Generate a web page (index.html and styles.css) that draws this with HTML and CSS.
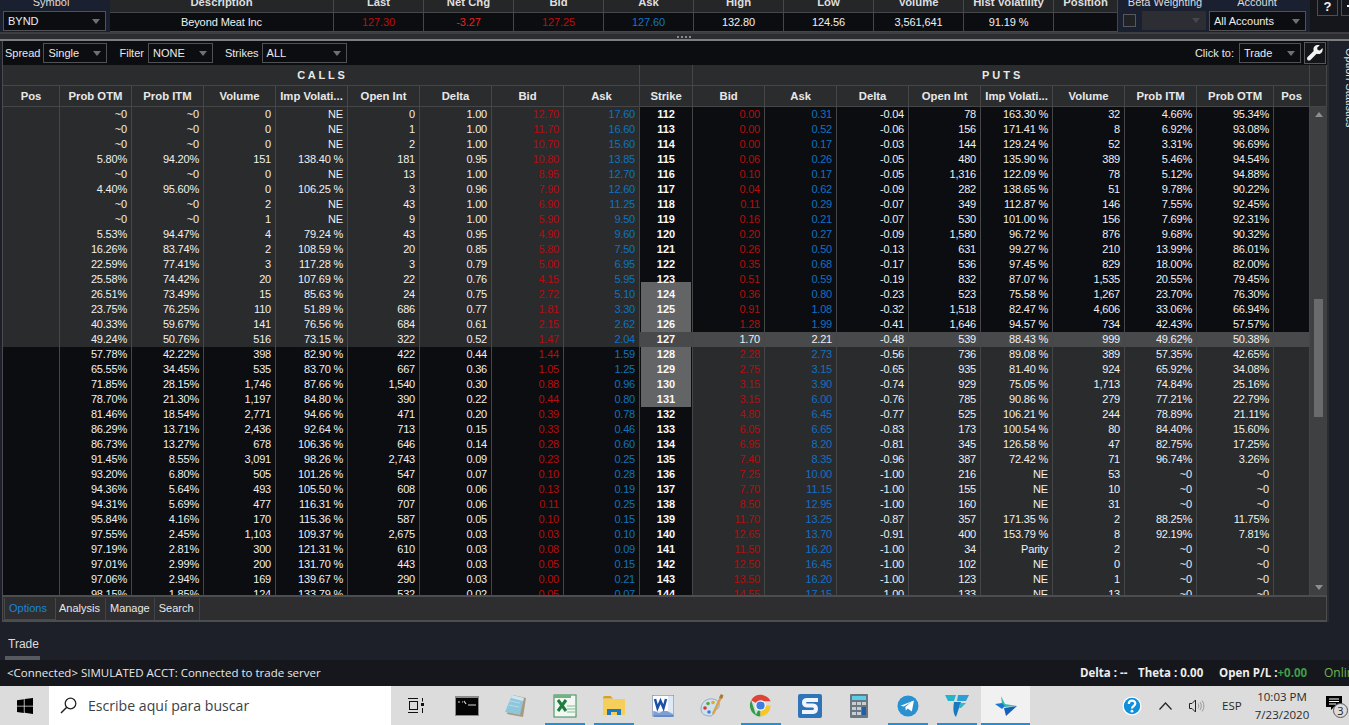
FILE: index.html
```html
<!DOCTYPE html>
<html lang="en">
<head>
<meta charset="utf-8">
<title>Option Chain</title>
<link rel="stylesheet" href="styles.css">
</head>
<body>
<header class="top">
  <div class="sym">
    <div class="lbl sym-lbl">Symbol</div>
    <div class="combo sym-combo">BYND<i class="caret"></i></div>
  </div>
  <div class="quote">
    <div class="qh">Description</div><div class="qh">Last</div><div class="qh">Net Chg</div><div class="qh">Bid</div><div class="qh">Ask</div><div class="qh">High</div><div class="qh">Low</div><div class="qh">Volume</div><div class="qh">Hist Volatility</div><div class="qh">Position</div>
    <div class="qd">Beyond Meat Inc</div><div class="qd red">127.30</div><div class="qd bright">-3.27</div><div class="qd red">127.25</div><div class="qd blue">127.60</div><div class="qd">132.80</div><div class="qd">124.56</div><div class="qd">3,561,641</div><div class="qd">91.19 %</div><div class="qd"></div>
  </div>
  <div class="acct">
    <div class="acct-labels"><span class="lbl beta">Beta Weighting</span><span class="lbl account">Account</span></div>
    <div class="acct-row">
      <span class="check"></span>
      <div class="combo disabled"><i class="caret"></i></div>
      <div class="combo acct-combo">All Accounts<i class="caret"></i></div>
    </div>
  </div>
  <div class="winbtns">
    <span class="winbtn">?</span>
    <span class="winbtn gear"><svg width="14" height="14" viewBox="0 0 14 14"><circle cx="7" cy="6" r="3" fill="none" stroke="#f2f2f2" stroke-width="2.500"/><path d="M7 0v3M7 9v3M1 6h3M10 6h3" stroke="#f2f2f2" stroke-width="2"/></svg></span>
  </div>
</header>

<div class="splitter"><span class="grip"></span></div>

<div class="main">
  <section class="panel">
    <div class="toolbar">
      <span class="tlabel">Spread</span><div class="combo c-spread">Single<i class="caret"></i></div>
      <span class="tlabel l-filter">Filter</span><div class="combo c-filter">NONE<i class="caret"></i></div>
      <span class="tlabel l-strikes">Strikes</span><div class="combo c-strikes">ALL<i class="caret"></i></div>
      <span class="tlabel l-click">Click to:</span><div class="combo c-click">Trade<i class="caret"></i></div>
      <button class="wrench" aria-label="Settings">
        <svg width="18" height="18" viewBox="0 0 18 18"><path d="M16.6 3.9l-2.7 2.6-2.2-.5-.6-2.2L13.800 1.200c-1.900-.7-4-.2-5.200 1.100-1.200 1.300-1.500 3-.9 4.600L1.600 13c-.8.800-.8 2 0 2.900.8.800 2.100.8 2.900 0l6.100-6.100c1.600.6 3.400.3 4.600-.9 1.300-1.300 1.800-3.200 1.400-5z" fill="#f2f2f2"/></svg>
      </button>
    </div>
    <table class="chain head">
      <colgroup><col class="w-pos"><col class="w-n"><col class="w-n"><col class="w-n"><col class="w-n"><col class="w-n"><col class="w-n"><col class="w-n"><col class="w-ask"><col class="w-str"><col class="w-n"><col class="w-n"><col class="w-n"><col class="w-n"><col class="w-n"><col class="w-n"><col class="w-n"><col class="w-otm"><col class="w-ppos"><col class="w-sb"></colgroup>
      <tr class="group"><th colspan="9">C A L L S</th><th></th><th colspan="9">P U T S</th><th></th></tr>
      <tr class="cols"><th>Pos</th><th>Prob OTM</th><th>Prob ITM</th><th>Volume</th><th>Imp Volati...</th><th>Open Int</th><th>Delta</th><th>Bid</th><th>Ask</th><th>Strike</th><th>Bid</th><th>Ask</th><th>Delta</th><th>Open Int</th><th>Imp Volati...</th><th>Volume</th><th>Prob ITM</th><th>Prob OTM</th><th>Pos</th><th></th></tr>
    </table>
    <div class="chain-body">
      <div class="rows">
        <table class="chain data">
          <colgroup><col class="w-pos"><col class="w-n"><col class="w-n"><col class="w-n"><col class="w-n"><col class="w-n"><col class="w-n"><col class="w-n"><col class="w-ask"><col class="w-str"><col class="w-n"><col class="w-n"><col class="w-n"><col class="w-n"><col class="w-n"><col class="w-n"><col class="w-n"><col class="w-otm"><col class="w-ppos"></colgroup>
          <tr class="ci"><td></td><td>~0</td><td>~0</td><td>0</td><td>NE</td><td>0</td><td>1.00</td><td>12.70</td><td>17.60</td><td>112</td><td>0.00</td><td>0.31</td><td>-0.04</td><td>78</td><td>163.30 %</td><td>32</td><td>4.66%</td><td>95.34%</td><td></td></tr>
          <tr class="ci"><td></td><td>~0</td><td>~0</td><td>0</td><td>NE</td><td>1</td><td>1.00</td><td>11.70</td><td>16.60</td><td>113</td><td>0.00</td><td>0.52</td><td>-0.06</td><td>156</td><td>171.41 %</td><td>8</td><td>6.92%</td><td>93.08%</td><td></td></tr>
          <tr class="ci"><td></td><td>~0</td><td>~0</td><td>0</td><td>NE</td><td>2</td><td>1.00</td><td>10.70</td><td>15.60</td><td>114</td><td>0.00</td><td>0.17</td><td>-0.03</td><td>144</td><td>129.24 %</td><td>52</td><td>3.31%</td><td>96.69%</td><td></td></tr>
          <tr class="ci"><td></td><td>5.80%</td><td>94.20%</td><td>151</td><td>138.40 %</td><td>181</td><td>0.95</td><td>10.80</td><td>13.85</td><td>115</td><td>0.06</td><td>0.26</td><td>-0.05</td><td>480</td><td>135.90 %</td><td>389</td><td>5.46%</td><td>94.54%</td><td></td></tr>
          <tr class="ci"><td></td><td>~0</td><td>~0</td><td>0</td><td>NE</td><td>13</td><td>1.00</td><td>8.95</td><td>12.70</td><td>116</td><td>0.10</td><td>0.17</td><td>-0.05</td><td>1,316</td><td>122.09 %</td><td>78</td><td>5.12%</td><td>94.88%</td><td></td></tr>
          <tr class="ci"><td></td><td>4.40%</td><td>95.60%</td><td>0</td><td>106.25 %</td><td>3</td><td>0.96</td><td>7.90</td><td>12.60</td><td>117</td><td>0.04</td><td>0.62</td><td>-0.09</td><td>282</td><td>138.65 %</td><td>51</td><td>9.78%</td><td>90.22%</td><td></td></tr>
          <tr class="ci"><td></td><td>~0</td><td>~0</td><td>2</td><td>NE</td><td>43</td><td>1.00</td><td>6.90</td><td>11.25</td><td>118</td><td>0.11</td><td>0.29</td><td>-0.07</td><td>349</td><td>112.87 %</td><td>146</td><td>7.55%</td><td>92.45%</td><td></td></tr>
          <tr class="ci"><td></td><td>~0</td><td>~0</td><td>1</td><td>NE</td><td>9</td><td>1.00</td><td>5.90</td><td>9.50</td><td>119</td><td>0.16</td><td>0.21</td><td>-0.07</td><td>530</td><td>101.00 %</td><td>156</td><td>7.69%</td><td>92.31%</td><td></td></tr>
          <tr class="ci"><td></td><td>5.53%</td><td>94.47%</td><td>4</td><td>79.24 %</td><td>43</td><td>0.95</td><td>4.90</td><td>9.60</td><td>120</td><td>0.20</td><td>0.27</td><td>-0.09</td><td>1,580</td><td>96.72 %</td><td>876</td><td>9.68%</td><td>90.32%</td><td></td></tr>
          <tr class="ci"><td></td><td>16.26%</td><td>83.74%</td><td>2</td><td>108.59 %</td><td>20</td><td>0.85</td><td>5.80</td><td>7.50</td><td>121</td><td>0.26</td><td>0.50</td><td>-0.13</td><td>631</td><td>99.27 %</td><td>210</td><td>13.99%</td><td>86.01%</td><td></td></tr>
          <tr class="ci"><td></td><td>22.59%</td><td>77.41%</td><td>3</td><td>117.28 %</td><td>3</td><td>0.79</td><td>5.00</td><td>6.95</td><td>122</td><td>0.35</td><td>0.68</td><td>-0.17</td><td>536</td><td>97.45 %</td><td>829</td><td>18.00%</td><td>82.00%</td><td></td></tr>
          <tr class="ci edge"><td></td><td>25.58%</td><td>74.42%</td><td>20</td><td>107.69 %</td><td>22</td><td>0.76</td><td>4.15</td><td>5.95</td><td>123</td><td>0.51</td><td>0.59</td><td>-0.19</td><td>832</td><td>87.07 %</td><td>1,535</td><td>20.55%</td><td>79.45%</td><td></td></tr>
          <tr class="ci near"><td></td><td>26.51%</td><td>73.49%</td><td>15</td><td>85.63 %</td><td>24</td><td>0.75</td><td>2.72</td><td>5.10</td><td>124</td><td>0.36</td><td>0.80</td><td>-0.23</td><td>523</td><td>75.58 %</td><td>1,267</td><td>23.70%</td><td>76.30%</td><td></td></tr>
          <tr class="ci near"><td></td><td>23.75%</td><td>76.25%</td><td>110</td><td>51.89 %</td><td>686</td><td>0.77</td><td>1.81</td><td>3.30</td><td>125</td><td>0.91</td><td>1.08</td><td>-0.32</td><td>1,518</td><td>82.47 %</td><td>4,606</td><td>33.06%</td><td>66.94%</td><td></td></tr>
          <tr class="ci near"><td></td><td>40.33%</td><td>59.67%</td><td>141</td><td>76.56 %</td><td>684</td><td>0.61</td><td>2.15</td><td>2.62</td><td>126</td><td>1.28</td><td>1.99</td><td>-0.41</td><td>1,646</td><td>94.57 %</td><td>734</td><td>42.43%</td><td>57.57%</td><td></td></tr>
          <tr class="ci atm"><td></td><td>49.24%</td><td>50.76%</td><td>516</td><td>73.15 %</td><td>322</td><td>0.52</td><td>1.47</td><td>2.04</td><td>127</td><td>1.70</td><td>2.21</td><td>-0.48</td><td>539</td><td>88.43 %</td><td>999</td><td>49.62%</td><td>50.38%</td><td></td></tr>
          <tr class="pi near"><td></td><td>57.78%</td><td>42.22%</td><td>398</td><td>82.90 %</td><td>422</td><td>0.44</td><td>1.44</td><td>1.59</td><td>128</td><td>2.28</td><td>2.73</td><td>-0.56</td><td>736</td><td>89.08 %</td><td>389</td><td>57.35%</td><td>42.65%</td><td></td></tr>
          <tr class="pi near"><td></td><td>65.55%</td><td>34.45%</td><td>535</td><td>83.70 %</td><td>667</td><td>0.36</td><td>1.05</td><td>1.25</td><td>129</td><td>2.75</td><td>3.15</td><td>-0.65</td><td>935</td><td>81.40 %</td><td>924</td><td>65.92%</td><td>34.08%</td><td></td></tr>
          <tr class="pi near"><td></td><td>71.85%</td><td>28.15%</td><td>1,746</td><td>87.66 %</td><td>1,540</td><td>0.30</td><td>0.88</td><td>0.96</td><td>130</td><td>3.15</td><td>3.90</td><td>-0.74</td><td>929</td><td>75.05 %</td><td>1,713</td><td>74.84%</td><td>25.16%</td><td></td></tr>
          <tr class="pi near"><td></td><td>78.70%</td><td>21.30%</td><td>1,197</td><td>84.80 %</td><td>390</td><td>0.22</td><td>0.44</td><td>0.80</td><td>131</td><td>3.15</td><td>6.00</td><td>-0.76</td><td>785</td><td>90.86 %</td><td>279</td><td>77.21%</td><td>22.79%</td><td></td></tr>
          <tr class="pi"><td></td><td>81.46%</td><td>18.54%</td><td>2,771</td><td>94.66 %</td><td>471</td><td>0.20</td><td>0.39</td><td>0.78</td><td>132</td><td>4.80</td><td>6.45</td><td>-0.77</td><td>525</td><td>106.21 %</td><td>244</td><td>78.89%</td><td>21.11%</td><td></td></tr>
          <tr class="pi"><td></td><td>86.29%</td><td>13.71%</td><td>2,436</td><td>92.64 %</td><td>713</td><td>0.15</td><td>0.33</td><td>0.46</td><td>133</td><td>6.05</td><td>6.65</td><td>-0.83</td><td>173</td><td>100.54 %</td><td>80</td><td>84.40%</td><td>15.60%</td><td></td></tr>
          <tr class="pi"><td></td><td>86.73%</td><td>13.27%</td><td>678</td><td>106.36 %</td><td>646</td><td>0.14</td><td>0.28</td><td>0.60</td><td>134</td><td>6.95</td><td>8.20</td><td>-0.81</td><td>345</td><td>126.58 %</td><td>47</td><td>82.75%</td><td>17.25%</td><td></td></tr>
          <tr class="pi"><td></td><td>91.45%</td><td>8.55%</td><td>3,091</td><td>98.26 %</td><td>2,743</td><td>0.09</td><td>0.23</td><td>0.25</td><td>135</td><td>7.40</td><td>8.35</td><td>-0.96</td><td>387</td><td>72.42 %</td><td>71</td><td>96.74%</td><td>3.26%</td><td></td></tr>
          <tr class="pi"><td></td><td>93.20%</td><td>6.80%</td><td>505</td><td>101.26 %</td><td>547</td><td>0.07</td><td>0.10</td><td>0.28</td><td>136</td><td>7.25</td><td>10.00</td><td>-1.00</td><td>216</td><td>NE</td><td>53</td><td>~0</td><td>~0</td><td></td></tr>
          <tr class="pi"><td></td><td>94.36%</td><td>5.64%</td><td>493</td><td>105.50 %</td><td>608</td><td>0.06</td><td>0.13</td><td>0.19</td><td>137</td><td>7.70</td><td>11.15</td><td>-1.00</td><td>155</td><td>NE</td><td>10</td><td>~0</td><td>~0</td><td></td></tr>
          <tr class="pi"><td></td><td>94.31%</td><td>5.69%</td><td>477</td><td>116.31 %</td><td>707</td><td>0.06</td><td>0.11</td><td>0.25</td><td>138</td><td>8.50</td><td>12.95</td><td>-1.00</td><td>160</td><td>NE</td><td>31</td><td>~0</td><td>~0</td><td></td></tr>
          <tr class="pi"><td></td><td>95.84%</td><td>4.16%</td><td>170</td><td>115.36 %</td><td>587</td><td>0.05</td><td>0.10</td><td>0.15</td><td>139</td><td>11.70</td><td>13.25</td><td>-0.87</td><td>357</td><td>171.35 %</td><td>2</td><td>88.25%</td><td>11.75%</td><td></td></tr>
          <tr class="pi"><td></td><td>97.55%</td><td>2.45%</td><td>1,103</td><td>109.37 %</td><td>2,675</td><td>0.03</td><td>0.03</td><td>0.10</td><td>140</td><td>12.65</td><td>13.70</td><td>-0.91</td><td>400</td><td>153.79 %</td><td>8</td><td>92.19%</td><td>7.81%</td><td></td></tr>
          <tr class="pi"><td></td><td>97.19%</td><td>2.81%</td><td>300</td><td>121.31 %</td><td>610</td><td>0.03</td><td>0.08</td><td>0.09</td><td>141</td><td>11.50</td><td>16.20</td><td>-1.00</td><td>34</td><td>Parity</td><td>2</td><td>~0</td><td>~0</td><td></td></tr>
          <tr class="pi"><td></td><td>97.01%</td><td>2.99%</td><td>200</td><td>131.70 %</td><td>443</td><td>0.03</td><td>0.05</td><td>0.15</td><td>142</td><td>12.50</td><td>16.45</td><td>-1.00</td><td>102</td><td>NE</td><td>0</td><td>~0</td><td>~0</td><td></td></tr>
          <tr class="pi"><td></td><td>97.06%</td><td>2.94%</td><td>169</td><td>139.67 %</td><td>290</td><td>0.03</td><td>0.00</td><td>0.21</td><td>143</td><td>13.50</td><td>16.20</td><td>-1.00</td><td>123</td><td>NE</td><td>1</td><td>~0</td><td>~0</td><td></td></tr>
          <tr class="pi"><td></td><td>98.15%</td><td>1.85%</td><td>124</td><td>133.79 %</td><td>532</td><td>0.02</td><td>0.05</td><td>0.07</td><td>144</td><td>14.55</td><td>17.15</td><td>-1.00</td><td>133</td><td>NE</td><td>13</td><td>~0</td><td>~0</td><td></td></tr>
        </table>
      </div>
      <div class="scrollbar">
        <i class="sb-up"></i>
        <i class="sb-down"></i>
        <span class="thumb"></span>
      </div>
    </div>
    <nav class="tabs">
      <span class="tab active">Options</span><span class="tab">Analysis</span><span class="tab">Manage</span><span class="tab">Search</span>
    </nav>
  </section>
  <aside class="side"><span class="side-text">Option Statistics</span></aside>
</div>

<div class="lower">
  <span class="trade-tab">Trade</span>
</div>

<footer class="status">
  <span class="conn">&lt;Connected&gt; SIMULATED ACCT: Connected to trade server</span>
  <span class="stat s-delta">Delta : --</span>
  <span class="stat s-theta">Theta : 0.00</span>
  <span class="stat s-pl">Open P/L :<em>+0.00</em></span>
  <span class="online">Online</span>
</footer>

<div class="taskbar">
  <div class="start">
    <svg width="16" height="16" viewBox="0 0 16 16"><path d="M0 2.200l6.800-1v6.500H0zM7.600 1.100L16 0v7.700H7.600zM0 8.400h6.800v6.500L0 13.900zM7.600 8.400H16V16l-8.400-1.200z" fill="#000"/></svg>
  </div>
  <div class="search">
    <svg width="17" height="17" viewBox="0 0 17 17"><circle cx="10.500" cy="6.500" r="5.300" fill="none" stroke="#222" stroke-width="1.300"/><path d="M6.700 10.300L1 16" stroke="#222" stroke-width="1.500"/></svg>
    <span>Escribe aquí para buscar</span>
  </div>
  <div class="taskview">
    <svg width="17" height="15" viewBox="0 0 17 15"><path d="M0 .5h10M0 14.500h10M4 .5h0" stroke="#111" stroke-width="1"/><rect x="1.500" y="3.500" width="8" height="8" fill="none" stroke="#111"/><rect x="13" y="5" width="3" height="3" fill="#111"/><path d="M14.500 0v3.500M14.500 10v5" stroke="#111"/></svg>
  </div>
  <div class="app">
    <svg width="24" height="20" viewBox="0 0 24 20"><rect width="24" height="20" fill="#8a8a8a"/><rect x="1" y="2" width="22" height="17" fill="#050505"/><path d="M3 6h2M7 6h1M9 5l2 3M13 9h8" stroke="#d8d8d8" stroke-width="1.200"/></svg>
  </div>
  <div class="app">
    <svg width="24" height="24" viewBox="0 0 24 24"><path d="M9 1l13 3-3 19-16-3z" fill="#a89a7c"/><path d="M8 1l12 3-4 17L1 18z" fill="#8fc6dc"/><path d="M8 1l12 3-1 3L7 4z" fill="#cfe6ef"/><path d="M6 7l10 2M5 11l10 2" stroke="#b6dbe8" stroke-width="1"/></svg>
  </div>
  <div class="app running">
    <svg width="24" height="24" viewBox="0 0 24 24"><rect x="1" y="1" width="22" height="22" fill="#f3f7f3" stroke="#3a8a55"/><path d="M1 1h17v3H1z" fill="#6db47f"/><path d="M5 6l8 11M13 6L5 17" stroke="#1e7d3c" stroke-width="3"/><path d="M14 12h8M14 15h8M14 18h8" stroke="#7dbd8d"/></svg>
  </div>
  <div class="app running">
    <svg width="22" height="20" viewBox="0 0 22 20"><path d="M0 2c0-1 .5-2 1.500-2h6L10 2.500H0z" fill="#d9a21b"/><rect y="3" width="22" height="16" fill="#f6cf5a"/><path d="M4 19v-6h14v6h-4v-3H8v3z" fill="#1e78c8"/></svg>
  </div>
  <div class="app">
    <svg width="22" height="22" viewBox="0 0 22 22"><rect x="1" y="0" width="21" height="21" fill="#dfe8f5" stroke="#5a7fb5"/><path d="M2 16l5 2 6-3 8 4v3H2z" fill="#3d6fc0" opacity=".6"/><rect x="1" y="1" width="15" height="15" fill="#fff"/><path d="M3 4l2.500 9L8.500 6l3 7L14 4" fill="none" stroke="#1b4fa8" stroke-width="2.500"/></svg>
  </div>
  <div class="app">
    <svg width="24" height="24" viewBox="0 0 24 24"><path d="M1 15C1 8 7 4 13 5c5 .8 7 4 6 8-.8 3-4 2-5 4-.8 2-.5 5-4 5-5 0-9-2-9-7z" fill="#cfe0ee" stroke="#7d96aa" stroke-width=".7"/><circle cx="5" cy="14" r="1.800" fill="#d8392b"/><circle cx="8" cy="9.500" r="1.800" fill="#58a846"/><circle cx="13" cy="8.500" r="1.800" fill="#e8a821"/><circle cx="9" cy="18" r="1.800" fill="#3b7fd0"/><path d="M22 1l-9 19" stroke="#d9a050" stroke-width="2.500"/><path d="M21 0l2.500 1.500L22 5l-3-1.500z" fill="#a87a3a"/></svg>
  </div>
  <div class="app running">
    <svg width="23" height="23" viewBox="0 0 24 24"><path d="M12 12L2.300 6.500A11.500 11.500 0 0 1 22.600 7.500H12z" fill="#e04335"/><path d="M12 12l-4.800 9.600L2.300 6.500A11.500 11.500 0 0 0 12 23.500z" fill="#2f9e48"/><path d="M12 12h10.600A11.500 11.500 0 0 1 12 23.500z" fill="#f9c723"/><circle cx="12" cy="12" r="5.500" fill="#fff"/><circle cx="12" cy="12" r="4.300" fill="#3d7ee0"/></svg>
  </div>
  <div class="app">
    <svg width="24" height="24" viewBox="0 0 24 24"><rect width="24" height="24" rx="2" fill="#2f73b8"/><path d="M20 6H9C5 6 5 11 9 11.500h6c4 .5 4 6 0 6.500H4" fill="none" stroke="#f0f6fc" stroke-width="4"/></svg>
  </div>
  <div class="app">
    <svg width="18" height="24" viewBox="0 0 18 24"><rect width="18" height="24" rx="1" fill="#6b7680"/><rect x="2" y="2" width="14" height="4" fill="#58cfe6"/><g fill="#c6ced4"><rect x="2" y="8" width="4" height="3"/><rect x="7" y="8" width="4" height="3"/><rect x="12" y="8" width="4" height="3"/><rect x="2" y="13" width="4" height="3"/><rect x="7" y="13" width="4" height="3"/><rect x="2" y="18" width="4" height="3"/><rect x="7" y="18" width="4" height="3"/></g><rect x="12" y="13" width="4" height="8" fill="#1f5fa5"/></svg>
  </div>
  <div class="app running">
    <svg width="22" height="22" viewBox="0 0 22 22"><circle cx="11" cy="11" r="10.500" fill="#2a90d0"/><path d="M3.500 10.800l13.500-5.300-2.200 11-4-3-2 2-.5-3.400 6-5.100-7.500 4.400z" fill="#fff"/></svg>
  </div>
  <div class="app running">
    <svg width="24" height="24" viewBox="0 0 24 24"><path d="M0 1h11l-2 6H3z" fill="#25b5c9"/><path d="M13 1h11l-3 6h-9z" fill="#2a9fd6"/><path d="M9 8h7l-5 15c-3-3-3-9-2-15z" fill="#167ac0"/><path d="M15 9h6l-5 5h-2z" fill="#2fb8c8"/></svg>
  </div>
  <div class="app running current">
    <svg width="22" height="22" viewBox="0 0 22 22"><path d="M6 1l4 8 12 2-12 1-3-3z" fill="#3bb9b0"/><path d="M0 9l7-1 3 3-3 3z" fill="#1b78d2"/><path d="M22 11L11 21 9 13z" fill="#1560b8"/></svg>
  </div>
  <div class="tray">
    <svg class="t-help" width="20" height="20" viewBox="0 0 20 20"><circle cx="10" cy="10" r="9.500" fill="#fff"/><circle cx="10" cy="10" r="8.200" fill="#0f8fdc"/><path d="M6.800 8c0-4.300 6.500-4.300 6.500-.5 0 2.500-3.300 2.500-3.300 5" fill="none" stroke="#fff" stroke-width="2.200"/><circle cx="10" cy="15.200" r="1.400" fill="#fff"/></svg>
    <svg class="t-chev" width="13" height="8" viewBox="0 0 13 8"><path d="M.5 7.500l6-6.500 6 6.500" fill="none" stroke="#222" stroke-width="1.200"/></svg>
    <svg class="t-vol" width="16" height="14" viewBox="0 0 16 14"><path d="M.5 4.500h2.500l3.500-3.500v12L3 9.500H.5z" fill="none" stroke="#222"/><path d="M9 4.500c1 1.500 1 3.500 0 5M11 3c1.700 2.500 1.700 5.500 0 8M13 1.500c2.500 3.500 2.500 7.500 0 11" fill="none" stroke="#999"/></svg>
    <span class="t-lang">ESP</span>
    <span class="t-clock"><span>10:03 PM</span><span>7/23/2020</span></span>
    <span class="t-note">
      <svg width="16" height="14" viewBox="0 0 16 14"><path d="M0 0h16v11H8l-3 3v-3H0z" fill="#000"/><path d="M3 3h10M3 5.500h10M3 8h7" stroke="#fff"/></svg>
      <b class="badge">3</b>
    </span>
  </div>
</div>
</body>
</html>
```
FILE: styles.css
```css
* { box-sizing: border-box; }
html, body { margin: 0; padding: 0; }
body {
  width: 1349px; height: 725px; overflow: hidden;
  background: #1d2029; color: #e4e4e4;
  font: 11px "Liberation Sans", Arial, sans-serif;
  display: flex; flex-direction: column;
}

/* top quote strip */
.top { display: flex; height: 32px; flex: none; background: #14161c; }
.sym { width: 110px; flex: none; background: #1b2030; }
.lbl { display: block; height: 11px; line-height: 4px; overflow: hidden; text-align: center; font-size: 11px; color: #dcdcdc; }
.sym-lbl { width: 102px; }
.sym-combo { margin: 0 0 0 3px; width: 103px; height: 20px; }
.quote {
  width: 1008px; flex: none; display: grid;
  grid-template-columns: 224px repeat(8, 90px) 64px;
  grid-template-rows: 13px 19px;
}
.qh {
  background: #252628; border-right: 1px solid #46474a; border-bottom: 1px solid #46474a;
  line-height: 5px; height: 13px; overflow: hidden; text-align: center;
  font-weight: bold; font-size: 11.300px; color: #dedede;
}
.qd {
  background: #0c0d10; border-right: 1px solid #46474a; border-bottom: 1px solid #46474a;
  line-height: 18px; text-align: center; letter-spacing: -.1px; color: #f0f0f0;
}
.qd.red { color: #bd0d0d; }
.qd.bright { color: #e62222; }
.qd.blue { color: #0f75c4; }
.acct { width: 192px; flex: none; background: #1b2030; }
.acct-labels { display: flex; height: 11px; }
.beta { width: 94px; flex: none; }
.account { width: 90px; flex: none; }
.acct-row { display: flex; align-items: flex-start; padding-left: 5px; height: 20px; }
.check { width: 13px; height: 13px; margin: 3px 6px 0 0; border: 1px solid #55575c; background: #202226; flex: none; }
.combo {
  display: flex; align-items: center; flex: none;
  height: 20px; padding-left: 4px;
  border: 1px solid #505154; background: #0c0d10; color: #ececec; font-size: 11px;
}
.caret {
  margin-left: auto; margin-right: 5px;
  width: 0; height: 0; border: 4.500px solid transparent; border-top: 5px solid #6f7074; border-bottom: 0;
}
.combo.disabled { width: 64px; height: 19px; background: #2c2e33; border-color: #2c2e33; margin-right: 3px; }
.combo.disabled .caret { border-top-color: #45474c; }
.acct-combo { width: 97px; height: 20px; }
.winbtns { flex: 1; display: flex; gap: 3px; padding-left: 7px; align-items: flex-start; overflow: hidden; }
.winbtn {
  flex: none; width: 21px; height: 16px; border: 1px solid #4d4e52; border-top: 0;
  text-align: center; font-weight: bold; font-size: 13px; line-height: 13px; color: #f2f2f2;
}
.gear { padding-left: 2px; }

/* splitter */
.splitter {
  height: 9px; flex: none; display: flex; justify-content: center; align-items: center;
  background: #2b2d31; border-top: 2px solid #3c3e42; border-bottom: 2px solid #7d7e80;
}
.grip { width: 15px; height: 2px; margin-left: 20px; background: repeating-linear-gradient(90deg, #8a8b8d 0 2px, transparent 2px 4px); }

/* main panel */
.main { flex: none; height: 581px; display: flex; }
.panel {
  width: 1327px; margin-left: 2px; flex: none; display: flex; flex-direction: column;
  border-left: 1px solid #4a4b4e; border-right: 2px solid #2a2c31;
}
.side { flex: 1; min-width: 0; overflow: hidden; padding: 7px 0 0 15px; }
.side-text { display: block; writing-mode: vertical-rl; color: #e4e4e4; font-size: 11px; white-space: nowrap; }

.toolbar {
  height: 24px; flex: none; display: flex; align-items: center;
  background: #0c0d10; padding-left: 2px;
}
.tlabel { font-size: 11px; color: #e8e8e8; margin-right: 3px; }
.c-spread { width: 64px; }
.l-filter { margin-left: 12px; margin-right: 4px; }
.c-filter { width: 65px; }
.l-strikes { margin-left: 12px; margin-right: 3px; }
.c-strikes { width: 85px; }
.l-click { margin-left: auto; margin-right: 5px; }
.c-click { width: 62px; margin-right: 3px; }
.wrench {
  width: 22px; height: 22px; padding: 1px; margin-right: 1px; flex: none;
  background: #141518; border: 1px solid #55565a; display: flex; align-items: center; justify-content: center;
}

/* chain table */
.chain { table-layout: fixed; border-collapse: separate; border-spacing: 0; }
.chain.head { width: 1324px; flex: none; }
.chain.data { width: 1307px; }
.w-pos { width: 57px; } .w-n { width: 72px; } .w-ask { width: 76px; } .w-str { width: 53px; }
.w-otm { width: 77px; } .w-ppos { width: 36px; } .w-sb { width: 17px; }
.chain th {
  height: 21px; padding: 0 2px; background: #2b2c2e; color: #e8e8e8;
  border-right: 1px solid #454648; border-bottom: 1px solid #454648;
  font-size: 11.300px; font-weight: bold; text-align: center; white-space: nowrap; overflow: hidden;
}
.group th { font-size: 11px; font-weight: bold; height: 21px; }
.chain-body { flex: none; height: 488px; display: flex; overflow: hidden; }
.rows { width: 1307px; flex: none; overflow: hidden; }
.data td {
  height: 15px; line-height: 15px; padding: 0 4px 0 0; overflow: hidden; white-space: nowrap;
  text-align: right; background: #0c0d10; color: #f0f0f0; letter-spacing: -.2px;
  border-right: 1px solid #454648;
}
.ci td:nth-child(-n+9), .pi td:nth-child(n+11) { background: #2a2b2d; }
.data td:nth-child(8), .data td:nth-child(11) { color: #b50d0d; }
.data td:nth-child(9), .data td:nth-child(12) { color: #0f72c0; }
.data td:nth-child(10) { text-align: center; padding: 0; font-weight: bold; color: #f8f8f8; letter-spacing: 0; }
.near td:nth-child(10) { background: #636466; box-shadow: inset 1px 0 #0c0d10, inset -1px 0 #0c0d10; }
.edge td:nth-child(10) { background: linear-gradient(#0c0d10 10px, #636466 10px); box-shadow: inset 1px 0 #0c0d10, inset -1px 0 #0c0d10; }
.atm td:nth-child(n+10) { background: #48494b; }
.atm td:nth-child(11), .atm td:nth-child(12) { color: #f0f0f0; }

/* scrollbar */
.scrollbar { position: relative; width: 17px; flex: none; background: #3f4042; display: flex; flex-direction: column; justify-content: space-between; padding: 5px 0 5px; align-items: center; }
.sb-up, .sb-down { width: 0; height: 0; border: 4.500px solid transparent; }
.sb-up { border-bottom: 5px solid #8e8f91; border-top: 0; }
.sb-down { border-top: 5px solid #8e8f91; border-bottom: 0; }
.thumb { position: absolute; left: 4px; top: 192px; width: 9px; height: 118px; background: #6a6b6d; }

/* tabs */
.tabs {
  flex: 1; display: flex; align-items: flex-start; padding: 1px 0 0 1px;
  background: #2e2e30; border-top: 2px solid #4c4d4f; border-bottom: 2px solid #4c4d4f; border-right: 1px solid #4c4d4f;
}
.tab { height: 22px; line-height: 21px; padding: 0 4px; border-right: 1px solid #424345; color: #e8e8e8; font-size: 11px; }
.tab:nth-child(2) { padding: 0 5px 0 3px; }
.tab:nth-child(4) { padding: 0 5px 0 4px; }
.tab.active { color: #1b83d8; border: 1px solid #47484a; border-top: 0; width: 52px; padding: 0 4px; }

/* trade strip + status */
.lower { height: 38px; flex: none; padding: 15px 0 0 5px; }
.trade-tab { display: block; width: 35px; height: 23px; padding-left: 3px; border-bottom: 4px solid #575a60; font-size: 12px; color: #dcdcdc; line-height: 15px; }
.status {
  height: 26px; flex: none; display: flex; align-items: center; overflow: hidden;
  background: #15171c; padding: 0 0 2px 7px; font: 12px "Open Sans", sans-serif; color: #e8e8e8; white-space: nowrap;
}
.conn { width: 1073px; flex: none; font-size: 11.500px; }
.stat { flex: none; font-weight: bold; font-size: 11.500px; color: #eeeeee; }
.s-delta { width: 58px; }
.s-theta { width: 81px; }
.s-pl { width: 105px; }
.stat em { font-style: normal; color: #3f9a4a; }
.online { flex: none; color: #6fb84a; }

/* windows taskbar */
.taskbar { height: 39px; flex: none; display: flex; align-items: center; background: #dcdcdc; }
.start { width: 49px; height: 39px; display: flex; align-items: center; justify-content: center; flex: none; }
.search {
  width: 342px; height: 39px; flex: none; background: #fff; display: flex; align-items: center; gap: 11px; padding-left: 11px;
  font: 14.100px "Open Sans", sans-serif; color: #3b4148;
}
.taskview { width: 51px; height: 39px; flex: none; display: flex; align-items: center; justify-content: center; }
.app { position: relative; width: 49px; height: 39px; flex: none; display: flex; align-items: center; justify-content: center; }
.app.running::after { content: ""; position: absolute; left: 5px; right: 4px; bottom: 0; height: 2px; background: #2090d8; }
.app.current { background: #f1f1f1; }
.app.current::after { left: 0; right: 0; }
.tray { flex: 1; display: flex; align-items: center; height: 39px; font: 11.500px "Open Sans", sans-serif; color: #2a2a2a; position: relative; }
.t-help { margin-left: 92px; flex: none; }
.t-chev { margin-left: 17px; flex: none; }
.t-vol { margin-left: 17px; flex: none; }
.t-lang { margin-left: 17px; width: 20px; flex: none; }
.t-clock { margin-left: 11px; width: 58px; flex: none; display: flex; flex-direction: column; align-items: center; line-height: 18px; }
.t-note { position: relative; margin-left: 15px; display: flex; flex: none; top: -3px; }
.badge {
  position: absolute; left: 7px; top: 7px; width: 15px; height: 15px; border-radius: 50%;
  background: #dcdcdc; border: 1px solid #555; font-weight: normal; font-size: 11px; line-height: 13px; text-align: center; color: #222;
}
```
